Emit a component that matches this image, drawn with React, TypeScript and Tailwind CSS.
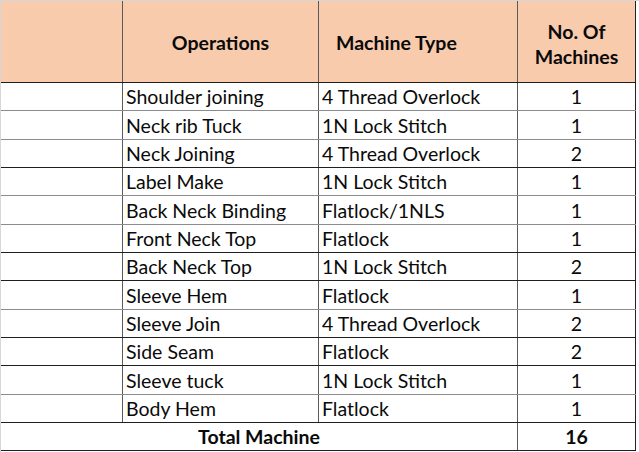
const rows = [
  { op: "Shoulder joining", type: "4 Thread Overlock", n: 1, h: "h-[28px]", line: "border-[#8c8c8c]" },
  { op: "Neck rib Tuck", type: "1N Lock Stitch", n: 1, h: "h-[29px]", line: "border-[#8c8c8c]" },
  { op: "Neck Joining", type: "4 Thread Overlock", n: 2, h: "h-[28px]", line: "border-[#1f1f1f]" },
  { op: "Label Make", type: "1N Lock Stitch", n: 1, h: "h-[28px]", line: "border-[#8c8c8c]" },
  { op: "Back Neck Binding", type: "Flatlock/1NLS", n: 1, h: "h-[29px]", line: "border-[#8c8c8c]" },
  { op: "Front Neck Top", type: "Flatlock", n: 1, h: "h-[28px]", line: "border-[#1f1f1f]" },
  { op: "Back Neck Top", type: "1N Lock Stitch", n: 2, h: "h-[28px]", line: "border-[#1f1f1f]" },
  { op: "Sleeve Hem", type: "Flatlock", n: 1, h: "h-[29px]", line: "border-[#8c8c8c]" },
  { op: "Sleeve Join", type: "4 Thread Overlock", n: 2, h: "h-[28px]", line: "border-[#1f1f1f]" },
  { op: "Side Seam", type: "Flatlock", n: 2, h: "h-[28px]", line: "border-[#1f1f1f]" },
  { op: "Sleeve tuck", type: "1N Lock Stitch", n: 1, h: "h-[29px]", line: "border-[#8c8c8c]" },
  { op: "Body Hem", type: "Flatlock", n: 1, h: "h-[28px]", line: "border-[#1f1f1f]" },
]

const font = { fontFamily: "Lato, 'Open Sans', sans-serif" }

export default function App() {
  return (
    <div
      className="w-[639px] h-[452px] bg-white border-t border-l border-[#d6d6d6] text-[19.5px] text-[#0a0a0a]"
      style={font}
    >
      {/* header */}
      <div className="flex h-[82px] border-b border-[#1f1f1f] bg-[#f8cbad] w-[635px]">
        <div className="w-[122px] border-r border-[#5a5a5a]" />
        <div className="w-[196px] border-r border-[#5a5a5a] flex items-center justify-center font-bold pt-[2px]">
          Operations
        </div>
        <div className="w-[199px] border-r border-[#5a5a5a] flex items-center pl-[17px] font-bold pt-[2px]">
          Machine Type
        </div>
        <div className="w-[118px] border-r border-[#222] flex items-center justify-center text-center font-bold leading-[25px] pt-[4px]">
          No. Of
          <br />
          Machines
        </div>
      </div>

      {rows.map((r) => (
        <div key={r.op} className={`flex ${r.h} border-b ${r.line} w-[635px]`}>
          <div className="w-[122px] border-r border-[#5a5a5a]" />
          <div className="w-[196px] border-r border-[#5a5a5a] flex items-end pl-[3px] pb-[2px] leading-[22px] whitespace-nowrap">
            {r.op}
          </div>
          <div className="w-[199px] border-r border-[#5a5a5a] flex items-end pl-[3px] pb-[2px] leading-[22px] whitespace-nowrap">
            {r.type}
          </div>
          <div className="w-[118px] border-r border-[#222] flex items-end justify-center pb-[2px] leading-[22px]">
            {r.n}
          </div>
        </div>
      ))}

      {/* total */}
      <div className="flex h-[28px] border-b border-[#1f1f1f] w-[635px] font-bold">
        <div className="w-[517px] border-r border-[#5a5a5a] flex items-end justify-center pb-[2px] leading-[22px]">
          Total Machine
        </div>
        <div className="w-[118px] border-r border-[#222] flex items-end justify-center pb-[2px] leading-[22px]">
          16
        </div>
      </div>
    </div>
  )
}
